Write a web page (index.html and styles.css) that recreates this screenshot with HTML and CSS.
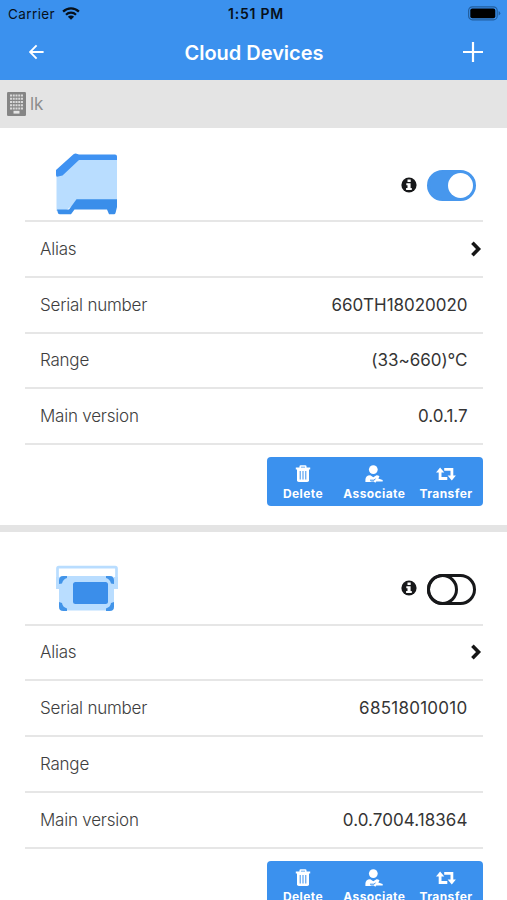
FILE: index.html
```html
<!DOCTYPE html>
<html lang="en">
<head>
<meta charset="utf-8">
<title>Cloud Devices</title>
<link rel="stylesheet" href="styles.css">
</head>
<body>
<svg class="defs" width="0" height="0" aria-hidden="true">
  <symbol id="info" viewBox="0 0 16 16"><circle cx="8" cy="8" r="7.6" fill="#17181a"/><path d="M6.5 2.4h3.2v2.5H6.5zM5.3 6.2h4.3v4.7h1.2v2H5.1v-2h1.4V8.2H5.3z" fill="#fff"/></symbol>
  <symbol id="chevron" viewBox="0 0 12 16"><path d="M2.4 1.8 8.5 8l-6.1 6.2" fill="none" stroke="#161616" stroke-width="3.6"/></symbol>
  <symbol id="trash" viewBox="0 0 16 18"><path d="M5.2 3V1.5q0-.6.6-.6h4.4q.6 0 .6.6V3" fill="none" stroke="#fff" stroke-width="1.5"/><path d="M.8 2.5h14.4v2H.8z" fill="#fff"/><path d="M2 4h12v11.2q0 1.8-1.8 1.8H3.8Q2 17 2 15.2z" fill="#fff"/><path d="M5.2 6v8.5M8 6v8.5M10.8 6v8.5" stroke="#3b91ee" stroke-width="1"/></symbol>
  <symbol id="associate" viewBox="0 0 18 18"><circle cx="8.3" cy="4.6" r="4.4" fill="#fff"/><path d="M.4 17v-2.2q0-4.4 4.8-4.6l3.1 2 3.2-2q2 .1 3 1.2l-1.2 2 4.4 1.7v1.3h-6.4l-1 1.4-1.6-1.3H6.5l-1.4.5z" fill="#fff"/><path d="M5 15.2h4.2l1.2-1.5" fill="none" stroke="#3b91ee" stroke-width="1"/></symbol>
  <symbol id="transfer" viewBox="0 0 20 14"><path d="M4.1 4v7.5h7.2M8.2 2.3h7.7V9" fill="none" stroke="#fff" stroke-width="2.8"/><path d="M0 5.6 4.1.6l4.2 5zM11.6 8.4h8.3l-4.1 5z" fill="#fff"/></symbol>
</svg>

<header class="top">
  <div class="status">
    <span class="carrier">Carrier
      <svg width="18" height="13" viewBox="0 0 18 13"><g fill="none" stroke="#07101a" stroke-width="2.2"><path d="M1.1 4.6a11.2 11.2 0 0 1 15.8 0"/><path d="M4 7.7a7.1 7.1 0 0 1 10 0"/></g><path d="M5.9 9.7a4.4 4.4 0 0 1 6.2 0L9 12.8z" fill="#07101a"/></svg>
    </span>
    <span class="time">1:51 PM</span>
    <svg class="battery" width="33" height="15" viewBox="0 0 33 15"><rect x=".6" y=".8" width="28.6" height="13" rx="3.8" fill="none" stroke="#225f9f" stroke-width="1.2"/><rect x="2.3" y="2.4" width="25" height="9.8" rx="2" fill="#000"/><path d="M30.6 5.1q1.7.8 1.7 2.2t-1.7 2.3z" fill="#225f9f"/></svg>
  </div>
  <nav class="nav">
    <svg class="back" width="16" height="16" viewBox="0 0 16 16"><path d="M14.6 8H1.6M7.6 1.3 1 8l6.6 6.7" fill="none" stroke="#fff" stroke-width="1.9"/></svg>
    <h1>Cloud Devices</h1>
    <svg class="add" width="20" height="20" viewBox="0 0 20 20"><path d="M10 0v20M0 10h20" stroke="#fff" stroke-width="2.2"/></svg>
  </nav>
</header>

<div class="org">
  <svg width="19" height="24" viewBox="0 0 19 24"><rect width="19" height="24" rx="1.2" fill="#858585"/><path d="M3 3.4h13M3 6.7h13M3 10h13M3 13.3h13M3 16.6h13" stroke="#d9d9d9" stroke-width="2" stroke-dasharray="2 .75"/><path d="M6.5 18.8h6v2.8h-6z" fill="#e5e5e5"/></svg>
  <span>lk</span>
</div>

<main>
  <section class="card">
    <div class="head">
      <svg class="device" width="62" height="62" viewBox="0 0 62 62"><path d="M.5 22 21 6h40v44H20L9 58H.5z" fill="#b9ddff"/><path d="M0 17 17.5 1.3q1-.8 2.2-.8L23 1.5h36q2 0 2 2V7H23L6.5 22.5 1 23.8q-1 0-1-2z" fill="#3f92f2"/><path d="M1 56.5h12l7.5-10.2H61V54l-1.5 6q-.3 1.3-1.5 1.3h-5L51 56.5H18.5L15 61.3H4q-1.5 0-2-1z" fill="#3a8eea"/></svg>
      <span class="controls">
        <svg class="info" width="16" height="16"><use href="#info"/></svg>
        <span class="switch on"></span>
      </span>
    </div>
    <div class="row"><span class="label">Alias</span><svg class="chevron" width="12" height="16"><use href="#chevron"/></svg></div>
    <div class="row"><span class="label">Serial number</span><span class="value">660TH18020020</span></div>
    <div class="row"><span class="label">Range</span><span class="value">(33~660)°C</span></div>
    <div class="row"><span class="label">Main version</span><span class="value">0.0.1.7</span></div>
    <div class="actions">
      <span class="action"><svg width="16" height="18"><use href="#trash"/></svg>Delete</span>
      <span class="action associate"><svg width="18" height="18"><use href="#associate"/></svg>Associate</span>
      <span class="action"><svg width="20" height="14"><use href="#transfer"/></svg>Transfer</span>
    </div>
  </section>

  <section class="card second">
    <div class="head">
      <svg class="device" width="62" height="62" viewBox="0 0 62 62"><path d="M1.5 29.5v-19q0-1.3 1.3-1.3h56.4q1.3 0 1.3 1.3v19" fill="none" stroke="#b9ddff" stroke-width="2.7"/><path d="M0 19h4v12H0zM58 19h4v12h-4z" fill="#b9ddff"/><rect x="3" y="18" width="55" height="34.5" rx="3" fill="#b9ddff"/><rect x="17" y="24" width="35" height="22" rx="2.5" fill="#3b8eea"/><path d="M3 26v-3.5Q3 18 7.5 18H11v2q-4 1-5 5.5zM58 26v-3.5Q58 18 53.5 18H50v2q4 1 5 5.5zM3 44v4.5q0 4.5 4.5 4.5H11v-2.5Q6.5 49 6 45zM58 44v4.5q0 4.5-4.5 4.5H50v-2.5q4.5-1.5 5-5.5z" fill="#4294e9"/></svg>
      <span class="controls">
        <svg class="info" width="16" height="16"><use href="#info"/></svg>
        <span class="switch"></span>
      </span>
    </div>
    <div class="row"><span class="label">Alias</span><svg class="chevron" width="12" height="16"><use href="#chevron"/></svg></div>
    <div class="row"><span class="label">Serial number</span><span class="value wide">68518010010</span></div>
    <div class="row"><span class="label">Range</span></div>
    <div class="row"><span class="label">Main version</span><span class="value version">0.0.7004.18364</span></div>
    <div class="actions">
      <span class="action"><svg width="16" height="18"><use href="#trash"/></svg>Delete</span>
      <span class="action associate"><svg width="18" height="18"><use href="#associate"/></svg>Associate</span>
      <span class="action"><svg width="20" height="14"><use href="#transfer"/></svg>Transfer</span>
    </div>
  </section>
</main>
</body>
</html>
```
FILE: styles.css
```css
*, *::before { box-sizing: border-box; }
html { height: 100%; overflow: hidden; }
body { margin: 0; height: 900px; overflow: hidden; background: #fff; font-family: Inter, "Liberation Sans", sans-serif; }
svg { display: block; flex: none; }
.defs { position: absolute; }

.top { height: 79.5px; background: #3b91ee; }
.status { display: grid; grid-template-columns: 1fr auto 1fr; align-items: center; height: 27px; padding: 0 6px 0 8px; color: #07101a; font-size: 13.5px; }
.carrier { display: flex; align-items: center; gap: 7px; letter-spacing: .4px; }
.time { margin-left: 3px; font-weight: 600; font-size: 14px; letter-spacing: .8px; }
.battery { justify-self: end; }
.nav { display: grid; grid-template-columns: 1fr auto 1fr; align-items: center; height: 50px; padding: 0 24px 0 29px; color: #fff; }
.nav h1 { margin: 1px 4px 0 0; font-size: 20px; font-weight: 600; letter-spacing: -.03px; }
.add { justify-self: end; }

.org { display: flex; align-items: center; gap: 4px; height: 48.5px; padding-left: 7px; background: #e4e4e4; color: #8d8d8d; font-size: 17px; font-weight: 400; letter-spacing: -.2px; }

.card { height: 403.5px; padding: 0 24.5px 0 25px; border-bottom: 7px solid #e4e4e4; }
.head { display: flex; align-items: center; justify-content: space-between; height: 94px; padding: 20px 6.5px 0 31px; border-bottom: 2px solid #e6e6e6; }
.second .device { margin-top: 2px; }
.controls { display: flex; align-items: center; gap: 10px; margin-top: 3px; }
.info { margin-bottom: 2px; }
.switch { display: flex; width: 49px; height: 31px; border: 3px solid #17181a; border-radius: 16px; }
.switch::before { content: ""; flex: none; width: 31px; height: 31px; margin: -3px; border: 3px solid #17181a; border-radius: 50%; }
.switch.on { justify-content: flex-end; border-color: #4797ed; background: #4797ed; }
.switch.on::before { width: 25px; height: 25px; margin: 0; border: 0; background: #fff; }

.row { display: flex; align-items: center; justify-content: space-between; height: 55.8px; padding: 0 15px; border-bottom: 2px solid #e6e6e6; font-size: 17px; }
.label { color: #3e3e3e; font-weight: 300; letter-spacing: -.22px; }
.value { color: #353535; letter-spacing: -.03px; }
.value.wide { letter-spacing: .26px; }
.value.version { letter-spacing: .06px; }
.chevron { margin-right: -14px; }

.actions { display: flex; justify-content: space-between; width: 215.5px; height: 49px; margin: 12px 0 0 auto; padding: 0 10px 0 16px; border-radius: 4px; background: #3b91ee; }
.action { display: grid; grid-template-rows: 27px 12px; align-content: start; justify-items: center; align-items: center; padding-top: 3.5px; color: #fff; font-size: 12px; line-height: 12px; font-weight: 700; letter-spacing: .4px; }
.associate { margin-left: 6px; }
```
